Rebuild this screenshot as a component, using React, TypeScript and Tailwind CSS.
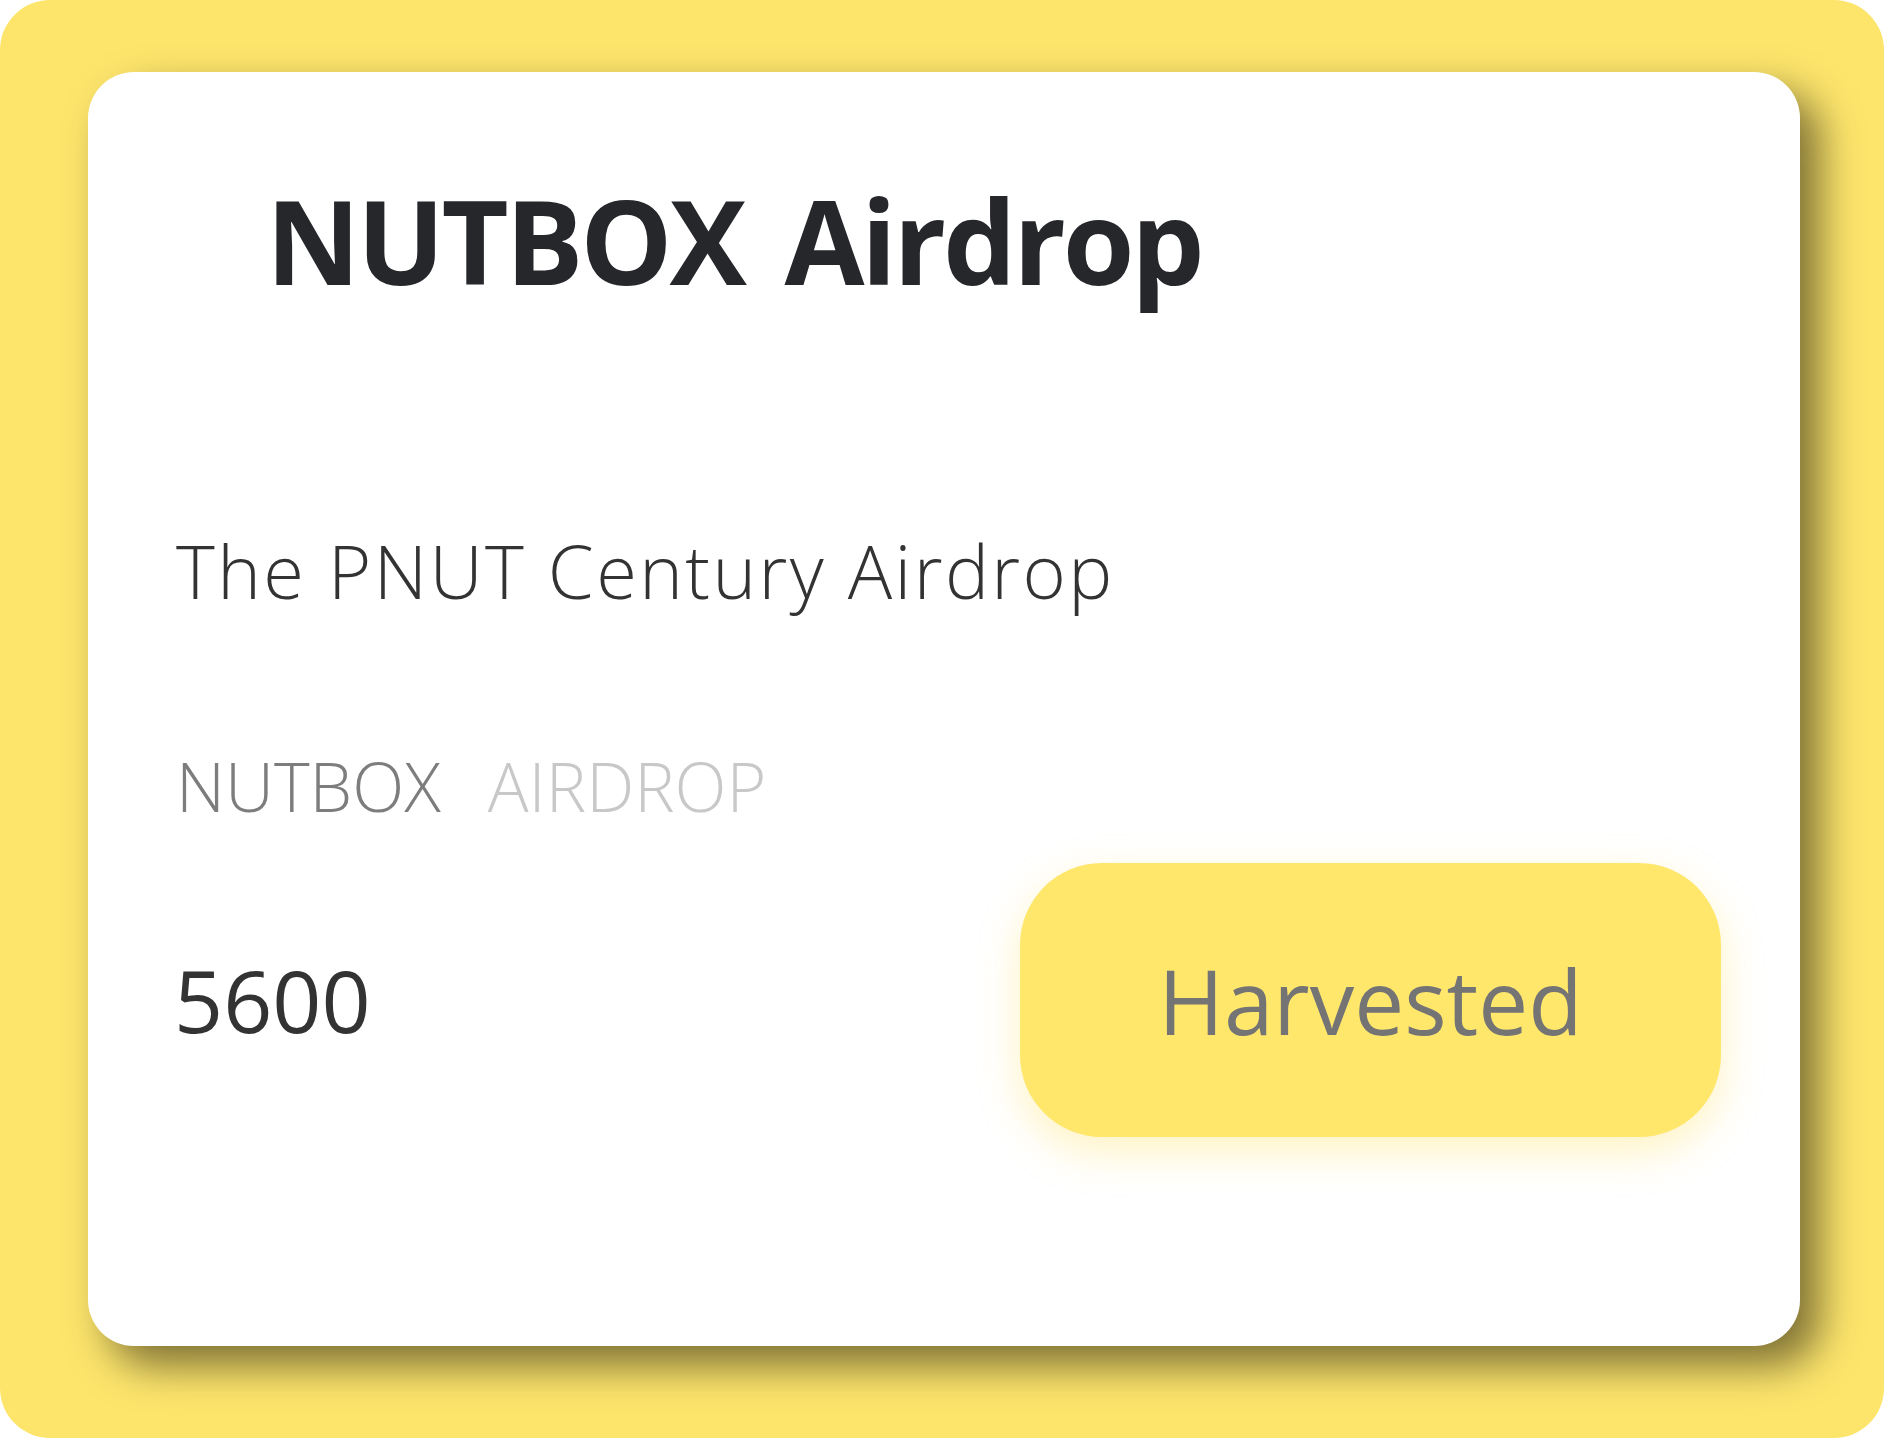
export default function App() {
  return (
    <div className="w-[1897px] h-[1443px] bg-white font-['Open_Sans',sans-serif]">
      <div className="w-[1884px] h-[1438px] rounded-[50px] bg-[#fde56c] pl-[88px] pt-[72px]">
        <div className="w-[1712px] h-[1274px] rounded-[46px] bg-white shadow-[20px_20px_40px_rgba(0,0,0,0.5)] pt-[110px] pl-[88px] pr-[79px] flex flex-col">
          <h1 className="ml-[90px] text-[116px] leading-none font-bold tracking-[-3.2px] [word-spacing:14px] text-[#25272b]">
            NUTBOX Airdrop
          </h1>
          <p className="mt-[236px] text-[74px] leading-none font-light tracking-[2.4px] text-[#333333]">
            The PNUT Century Airdrop
          </p>
          <div className="mt-[144px] flex gap-[47px] text-[68px] leading-none font-light text-[#7d7d7d]">
            <span>NUTBOX</span>
            <span className="text-[#c8c8c8]">AIRDROP</span>
          </div>
          <div className="mt-[43px] flex items-center justify-between">
            <span className="ml-[-2px] text-[86px] leading-none text-[#333333]">5600</span>
            <button
              type="button"
              className="w-[701px] h-[274px] rounded-[82px] bg-[#ffe76c] shadow-[0_15px_40px_rgba(255,220,80,0.35)] text-[89px] leading-none text-[#747474]"
            >
              Harvested
            </button>
          </div>
        </div>
      </div>
    </div>
  );
}
